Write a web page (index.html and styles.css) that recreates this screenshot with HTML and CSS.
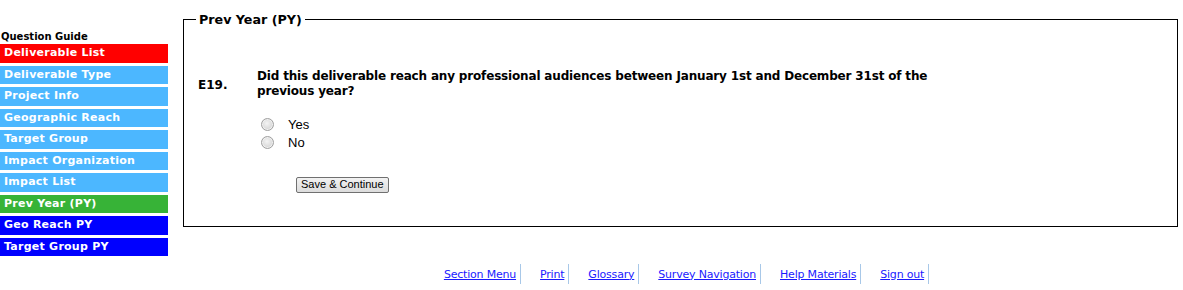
FILE: index.html
```html
<!DOCTYPE html>
<html>
<head>
<meta charset="utf-8">
<title>Prev Year (PY)</title>
<link rel="stylesheet" href="styles.css">
</head>
<body>
<div class="page">
  <nav class="guide">
    <div class="guide-title">Question Guide</div>
    <a class="item red" href="#">Deliverable List</a>
    <a class="item light" href="#">Deliverable Type</a>
    <a class="item light" href="#">Project Info</a>
    <a class="item light" href="#">Geographic Reach</a>
    <a class="item light" href="#">Target Group</a>
    <a class="item light" href="#">Impact Organization</a>
    <a class="item light" href="#">Impact List</a>
    <a class="item green" href="#">Prev Year (PY)</a>
    <a class="item blue" href="#">Geo Reach PY</a>
    <a class="item blue" href="#">Target Group PY</a>
  </nav>
  <main class="main">
    <fieldset class="box">
      <legend class="legend">Prev Year (PY)</legend>
      <div class="question">
        <div class="qnum">E19.</div>
        <div class="qtext">Did this deliverable reach any professional audiences between January 1st and December 31st of the previous year?</div>
      </div>
      <div class="answers">
        <label class="opt"><input type="radio" name="e19"><span>Yes</span></label>
        <label class="opt"><input type="radio" name="e19"><span>No</span></label>
      </div>
      <div class="actions">
        <button class="btn" type="button">Save &amp; Continue</button>
      </div>
    </fieldset>
    <footer class="footer">
      <a class="flink" href="#">Section Menu</a>
      <a class="flink" href="#">Print</a>
      <a class="flink" href="#">Glossary</a>
      <a class="flink" href="#">Survey Navigation</a>
      <a class="flink" href="#">Help Materials</a>
      <a class="flink" href="#">Sign out</a>
    </footer>
  </main>
</div>
</body>
</html>
```

FILE: styles.css
```css
html, body {
  margin: 0;
  padding: 0;
  background: #fff;
}
body {
  font-family: "DejaVu Sans", Verdana, sans-serif;
  color: #000;
}
.page {
  display: flex;
  align-items: flex-start;
}
.guide {
  width: 168px;
  flex: none;
  padding-top: 30px;
  display: flex;
  flex-direction: column;
}
.guide-title {
  font-size: 10px;
  font-weight: bold;
  padding-left: 1px;
  height: 14px;
  line-height: 14px;
}
.item {
  display: block;
  height: 18.5px;
  line-height: 18.5px;
  margin-bottom: 3px;
  padding-left: 4px;
  font-size: 11px;
  font-weight: bold;
  letter-spacing: 0.25px;
  color: #fff;
  text-decoration: none;
  white-space: nowrap;
}
.red { background: #ff0000; }
.light { background: #4cb7ff; }
.green { background: #37b337; }
.blue { background: #0000ff; }

.main {
  flex: 1;
  margin-left: 15px;
  margin-right: 5px;
  display: flex;
  flex-direction: column;
}
.box {
  margin: 12px 0 0 0;
  border: 1px solid #000;
  padding: 0 14px 33px 14px;
  min-width: 0;
}
.legend {
  font-size: 12.7px;
  font-weight: bold;
  padding: 0 3px;
  margin-left: -2px;
}
.question {
  display: flex;
  align-items: center;
  margin-top: 42px;
}
.qnum {
  width: 59px;
  flex: none;
  font-size: 12px;
  font-weight: bold;
  padding-top: 2px;
}
.qtext {
  width: 690px;
  font-size: 12px;
  font-weight: bold;
  letter-spacing: -0.17px;
  line-height: 15px;
}
.answers {
  display: flex;
  flex-direction: column;
  margin-top: 16px;
  padding-left: 63px;
}
.opt {
  display: flex;
  align-items: center;
  height: 18px;
  font-family: "Liberation Sans", Arial, sans-serif;
  font-size: 13px;
  color: #000;
}
.opt input {
  -webkit-appearance: none;
  appearance: none;
  box-sizing: border-box;
  margin: 0 14px 0 0;
  width: 13px;
  height: 13px;
  border-radius: 50%;
  border: 1px solid #a0a0a0;
  background: radial-gradient(circle at 45% 40%, #f4f4f4 0%, #dcdcdc 55%, #c8c8c8 100%);
  box-shadow: inset 0 0 0 1px #f0f0f0;
}
.actions {
  margin-top: 22px;
  padding-left: 98px;
}
.btn {
  font-family: "Liberation Sans", Arial, sans-serif;
  font-size: 11px;
  height: 16px;
  padding: 0 4px;
  border: 1px solid #707070;
  border-radius: 2px;
  background: linear-gradient(#f2f2f2, #dcdcdc);
  color: #000;
  line-height: 13px;
}
.footer {
  display: flex;
  justify-content: center;
  margin-top: 37px;
  padding-left: 12px;
}
.flink {
  font-size: 11px;
  letter-spacing: -0.2px;
  color: #1a1aff;
  text-decoration: underline;
  padding: 4px 4px 3px 19px;
  border-right: 1px solid #a8c8e8;
  line-height: 13px;
}
.flink:first-child {
  padding-left: 0;
}
```
